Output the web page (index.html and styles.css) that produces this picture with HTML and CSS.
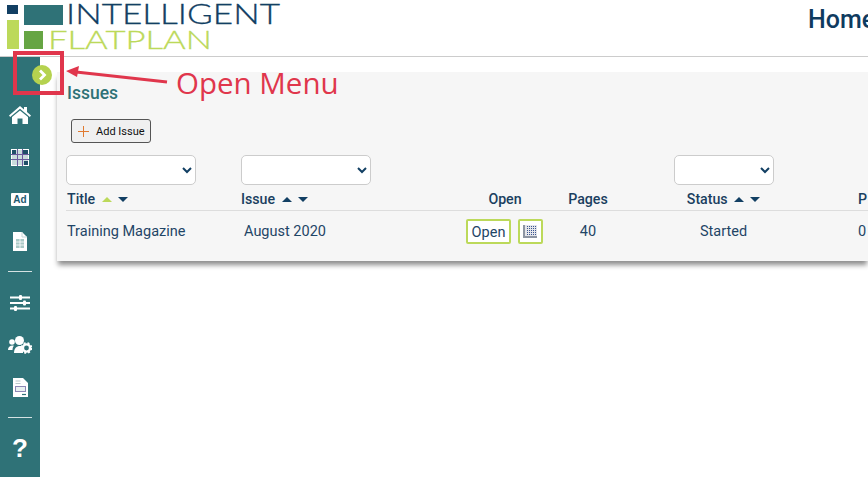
FILE: index.html
```html
<!DOCTYPE html>
<html>
<head>
  <meta name="viewport" content="width=device-width, initial-scale=1.0">
  <title>Issues</title>
  <link rel="stylesheet" href="styles.css">
</head>
<body>
  <header class="topbar">
    <svg class="logo" width="290" height="56" viewBox="0 0 290 56">
      <rect x="7" y="5" width="11" height="9" fill="#123f63"/>
      <rect x="7" y="20" width="12" height="29" fill="#bcd95a"/>
      <rect x="24" y="5" width="39" height="20" fill="#2f7277"/>
      <rect x="24" y="31" width="19" height="18" fill="#66a544"/>
      <text class="logo-top" x="66" y="24" textLength="214" lengthAdjust="spacingAndGlyphs">INTELLIGENT</text>
      <text class="logo-bottom" x="48" y="49" textLength="164" lengthAdjust="spacingAndGlyphs">FLATPLAN</text>
    </svg>
    <div class="page-title">Home</div>
  </header>

  <div class="main">
    <nav class="sidebar">
      <a class="nav-icon nav-first">
        <svg width="22" height="18" viewBox="0 0 22 18"><path d="M11 0 L15 3.4 V1 H18 V6 L22 9.6 L20.8 11 L11 2.8 L1.200 11 L0 9.600 Z M11 4.500 L19 11 V18 H13.500 V12.500 H8.500 V18 H3 V11 Z" fill="#fff"/></svg>
      </a>
      <a class="nav-icon">
        <svg width="18" height="17" viewBox="0 0 18 17"><rect width="18" height="17" fill="#fff"/><rect x="1" y="1" width="16" height="15" fill="#c9dcdc"/><path d="M1 1h4v4H1zM13 12h4v4h-4zM12 1h5v4h-5z" fill="#1f4f68"/><path d="M6.500 0v17M11.500 0v17M0 5.500h18M0 10.500h18" stroke="#6a5a9c" stroke-width="1"/></svg>
      </a>
      <a class="nav-icon"><span class="ad-box">Ad</span></a>
      <a class="nav-icon">
        <svg width="14" height="19" viewBox="0 0 14 19"><path d="M0 0H9L14 5V19H0Z" fill="#fff"/><path d="M9 0V5H14" fill="none" stroke="#c5d8d9"/><path d="M3 7h8v9H3z" fill="#a9c9c6"/><path d="M3 10h8M3 13h8M7 7v9" stroke="#fff" stroke-width=".8"/></svg>
      </a>
      <hr class="nav-rule">
      <a class="nav-icon">
        <svg width="20" height="16" viewBox="0 0 20 16"><path d="M0 2.500h20M0 8h20M0 13.500h20" stroke="#fff" stroke-width="2"/><rect x="9" y="0" width="3" height="5" rx="1" fill="#fff"/><rect x="13" y="5.500" width="3" height="5" rx="1" fill="#fff"/><rect x="4" y="11" width="3" height="5" rx="1" fill="#fff"/></svg>
      </a>
      <a class="nav-icon">
        <svg width="24" height="18" viewBox="0 0 24 18"><circle cx="11.500" cy="4.500" r="4.500" fill="#fff"/><circle cx="4" cy="6" r="2.800" fill="#fff"/><path d="M0 14c0-3 2-4.500 4.500-4.500 1 0 1.500.3 1.500.3-1 1-1.500 2.500-1.500 4.200z" fill="#fff"/><path d="M6 17c0-4.500 2.500-7 6-7 1.500 0 2.500.4 3 .8V17z" fill="#fff"/><circle cx="18.500" cy="12" r="3.600" fill="none" stroke="#fff" stroke-width="2.400"/><circle cx="18.500" cy="12" r="5" fill="none" stroke="#fff" stroke-width="1.500" stroke-dasharray="2 2"/></svg>
      </a>
      <a class="nav-icon">
        <svg width="15" height="19" viewBox="0 0 15 19"><path d="M0 0H10L15 5V19H0Z" fill="#fff"/><path d="M2.500 3h5M2.500 5.500h5" stroke="#b9c9cc"/><rect x="2.500" y="8.500" width="10" height="5" fill="#e8f0f0" stroke="#8d87b5"/><path d="M9 16.500h4" stroke="#2f7277" stroke-width="1.200"/></svg>
      </a>
      <hr class="nav-rule">
      <a class="nav-icon help">?</a>
    </nav>

    <section class="panel">
      <h2 class="panel-title">Issues</h2>
      <button class="add-btn">
        <svg width="11" height="11" viewBox="0 0 11 11"><path d="M5.500 0v11M0 5.500h11" stroke="#e07a30" stroke-width="1"/></svg>
        Add Issue
      </button>

      <div class="table">
        <div class="row filters">
          <div><select class="filter filter-wide"><option></option></select></div>
          <div><select class="filter filter-wide"><option></option></select></div>
          <div></div>
          <div></div>
          <div class="center"><select class="filter filter-small"><option></option></select></div>
          <div></div>
        </div>
        <div class="row heads">
          <div>Title <span class="sort"><i class="up on"></i><i class="down"></i></span></div>
          <div>Issue <span class="sort"><i class="up"></i><i class="down"></i></span></div>
          <div class="center">Open</div>
          <div class="center">Pages</div>
          <div class="center">Status <span class="sort"><i class="up"></i><i class="down"></i></span></div>
          <div class="last-col">P</div>
        </div>
        <div class="row item">
          <div>Training Magazine</div>
          <div class="issue-cell">August 2020</div>
          <div class="open-cell">
            <a class="open-btn">Open</a>
            <a class="open-btn icon-btn">
              <svg width="15" height="15" viewBox="0 0 15 15"><path d="M1 1h13v12H1z" fill="#e4e5ea"/><path d="M1 1v12h13" fill="none" stroke="#8d95a3" stroke-width="2"/><path d="M4 2.500h10M4 4.500h10M4 6.500h10M4 8.500h10M4 10.500h10" stroke="#3a5590" stroke-width="1" stroke-dasharray="1 1"/></svg>
            </a>
          </div>
          <div class="center">40</div>
          <div class="center">Started</div>
          <div class="last-col">0</div>
        </div>
      </div>
    </section>
  </div>

  <!-- menu toggle sits across the sidebar edge -->
  <a class="menu-toggle">
    <svg width="12" height="12" viewBox="0 0 12 12"><path d="M4 1.500l4.500 4.500-4.500 4.500" fill="none" stroke="#fff" stroke-width="2.800"/></svg>
  </a>

  <!-- red annotation drawn on top of the screenshot -->
  <div class="callout-box"></div>
  <svg class="callout-arrow" width="110" height="24" viewBox="0 0 110 24">
    <path d="M10 7 L101 17" stroke="#e0364c" stroke-width="3"/>
    <path d="M0 6 L13 1 L11 12 Z" fill="#e0364c"/>
  </svg>
  <div class="callout-text">Open Menu</div>
</body>
</html>
```

FILE: styles.css
```css
html, body {
  height: 100%;
}
body {
  margin: 0;
  width: 868px;
  height: 477px;
  overflow: hidden;
  position: relative;
  background-color: #fff;
  font-family: Roboto, sans-serif;
  color: #1f4566;
}
.topbar {
  display: flex;
  height: 56px;
  border-bottom: 1px solid #ccc;
  overflow: hidden;
}
.logo {
  flex: none;
}
.logo-top {
  font-family: Lato, sans-serif;
  font-weight: 300;
  font-size: 26.500px;
  fill: #123f63;
  stroke: #123f63;
  stroke-width: 0.3px;
}
.logo-bottom {
  font-family: Lato, sans-serif;
  font-weight: 300;
  font-size: 25.500px;
  fill: #bcd95a;
  stroke: #bcd95a;
  stroke-width: 0.3px;
}
.page-title {
  flex: none;
  margin-left: 518px;
  padding-top: 5px;
  font-size: 25px;
  font-weight: 500;
  color: #0f3b5f;
}
.main {
  display: flex;
  height: 420px;
}
.sidebar {
  flex: none;
  width: 40px;
  background-color: #2f7277;
  display: flex;
  flex-direction: column;
  align-items: center;
}
.nav-icon {
  height: 42px;
  width: 40px;
  flex: none;
  display: flex;
  align-items: center;
  justify-content: center;
}
.nav-first {
  margin-top: 37px;
}
.ad-box {
  width: 18px;
  height: 13px;
  background-color: #fff;
  border-radius: 1px;
  color: #1f5a70;
  font-family: "Liberation Sans", sans-serif;
  font-size: 10px;
  font-weight: bold;
  line-height: 13px;
  text-align: center;
}
.nav-rule {
  width: 24px;
  height: 1px;
  border: none;
  margin: 9px 0 10px;
  background-color: #d5e2e3;
  flex: none;
}
.help {
  color: #fff;
  font-family: "Liberation Sans", sans-serif;
  font-weight: bold;
  font-size: 26px;
  padding-bottom: 2px;
  box-sizing: border-box;
}
.panel {
  flex: 1;
  min-width: 0;
  height: 189px;
  margin: 15px 0 0 17px;
  padding-left: 9px;
  box-sizing: border-box;
  background-color: #f6f6f6;
  box-shadow: 0 5px 5px -1px rgba(0, 0, 0, 0.45);
}
.panel-title {
  margin: 0;
  padding: 11px 0 0 1px;
  font-size: 17.500px;
  line-height: 20px;
  font-weight: 500;
  color: #2f7277;
}
.add-btn {
  display: flex;
  align-items: center;
  gap: 7px;
  width: 80px;
  height: 24px;
  margin: 16px 0 0 5px;
  padding: 0 0 0 6px;
  border: 1px solid #555;
  border-radius: 3px;
  background-color: #f0f0f0;
  color: #111;
  font-family: Roboto, sans-serif;
  font-size: 11px;
}
.table {
  margin-top: 12px;
}
.row {
  display: grid;
  grid-template-columns: 175px 219px 90px 76px 195px 1fr;
}
.center {
  text-align: center;
}
.filter {
  display: block;
  height: 30px;
  border: 1px solid #ccc;
  border-radius: 5px;
  background-color: #fff;
  color: #123f63;
  font-family: Roboto, sans-serif;
}
.filter-wide {
  width: 130px;
}
.filter-small {
  width: 100px;
  margin: 0 auto;
}
.heads {
  height: 25px;
  line-height: 29px;
  font-size: 14.200px;
  font-weight: 500;
  border-bottom: 1px solid #ddd;
  color: #1a3f60;
}
.item > div:first-child {
  padding-left: 1px;
}
.heads > div:first-child {
  padding-left: 1px;
}
.last-col {
  padding-left: 37px;
}
.sort {
  display: inline-flex;
  align-items: center;
  gap: 6px;
  margin-left: 3px;
  vertical-align: 2px;
}
.sort i {
  width: 0;
  height: 0;
  border-left: 5px solid transparent;
  border-right: 5px solid transparent;
}
.sort .up {
  border-bottom: 5px solid #123f63;
}
.sort .up.on {
  border-bottom-color: #bcd95a;
}
.sort .down {
  border-top: 5px solid #123f63;
}
.item {
  height: 40px;
  align-items: center;
  font-size: 14.500px;
  padding-bottom: 0;
  color: #1f4566;
}
.issue-cell {
  padding-left: 3px;
}
.open-cell {
  display: flex;
  gap: 7px;
  padding-left: 6px;
}
.open-btn {
  box-sizing: border-box;
  height: 25px;
  width: 45px;
  border: 2px solid #bcd95a;
  border-radius: 2px;
  background-color: #fff;
  text-align: center;
  line-height: 23px;
}
.icon-btn {
  width: 25px;
  display: flex;
  align-items: center;
  justify-content: center;
}
.menu-toggle {
  position: absolute;
  left: 32px;
  top: 65px;
  width: 20px;
  height: 20px;
  border-radius: 50%;
  background-color: #b5d24f;
  display: flex;
  align-items: center;
  justify-content: center;
}
.callout-box {
  position: absolute;
  left: 13px;
  top: 51px;
  width: 51px;
  height: 44px;
  box-sizing: border-box;
  border: 4px solid #e0364c;
}
.callout-arrow {
  position: absolute;
  left: 66px;
  top: 65px;
}
.callout-text {
  position: absolute;
  left: 176px;
  top: 63px;
  font-family: "Open Sans", sans-serif;
  font-size: 29.500px;
  line-height: 40px;
  color: #e0364c;
  white-space: nowrap;
}
```
